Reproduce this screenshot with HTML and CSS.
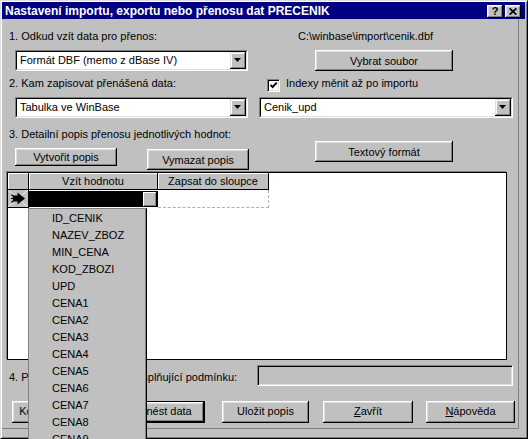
FILE: index.html
```html
<!DOCTYPE html>
<html lang="cs">
<head>
<meta charset="utf-8">
<title>Nastavení importu, exportu nebo přenosu dat</title>
<link rel="stylesheet" href="styles.css">
</head>
<body>
<div class="window">
  <div class="titlebar">
    <span class="title">Nastavení importu, exportu nebo přenosu dat PRECENIK</span>
    <div class="tbtns">
      <span class="tbtn help">?</span>
      <span class="tbtn"><svg width="8" height="7" viewBox="0 0 8 7"><path d="M0.6 0.4 L7.4 6.6 M7.4 0.4 L0.6 6.6" stroke="#000" stroke-width="1.7" fill="none"/></svg></span>
    </div>
  </div>
  <div class="client">
    <div class="row ra">
      <div class="lcol"><span class="lbl">1. Odkud vzít data pro přenos:</span></div>
      <span class="path">C:\winbase\import\cenik.dbf</span>
    </div>
    <div class="row rb">
      <div class="lcol">
        <div class="combo cl"><div class="combo-in"><span class="ctext">Formát DBF (memo z dBase IV)</span><span class="dd"><svg width="7" height="4" viewBox="0 0 7 4"><path d="M0 0H7L3.5 4Z" fill="#000"/></svg></span></div></div>
      </div>
      <div class="btn b-wide b-vybrat">Vybrat soubor</div>
    </div>
    <div class="row rc">
      <div class="lcol"><span class="lbl">2. Kam zapisovat přenášená data:</span></div>
      <span class="chk"><svg width="9" height="9" viewBox="0 0 9 9"><path d="M1.5 3.8 L3.6 6 L7.8 1.6" stroke="#000" stroke-width="1.9" fill="none"/></svg></span>
      <span class="chklbl">Indexy měnit až po importu</span>
    </div>
    <div class="row rd">
      <div class="lcol">
        <div class="combo cl"><div class="combo-in"><span class="ctext">Tabulka ve WinBase</span><span class="dd"><svg width="7" height="4" viewBox="0 0 7 4"><path d="M0 0H7L3.5 4Z" fill="#000"/></svg></span></div></div>
      </div>
      <div class="combo cr"><div class="combo-in"><span class="ctext">Cenik_upd</span><span class="dd"><svg width="7" height="4" viewBox="0 0 7 4"><path d="M0 0H7L3.5 4Z" fill="#000"/></svg></span></div></div>
    </div>
    <div class="row re">
      <span class="lbl">3. Detailní popis přenosu jednotlivých hodnot:</span>
    </div>
    <div class="row rf">
      <div class="btn b-vytvorit">Vytvořit popis</div>
      <div class="btn b-vymazat">Vymazat popis</div>
      <div class="btn b-wide b-text">Textový formát</div>
    </div>
    <div class="grid">
      <div class="grow ghead">
        <div class="gc ind hc"></div>
        <div class="gc c1 hc">Vzít hodnotu</div>
        <div class="gc c2 hc">Zapsat do sloupce</div>
      </div>
      <div class="grow gr1">
        <div class="gc ind rowind">
          <svg width="20" height="17" viewBox="0 0 20 17">
            <path d="M0 0 L20 17 M20 0 L0 17" stroke="#e8e8e8" stroke-width="1" fill="none"/>
            <path d="M9.5 2.5 L17 8.5 L9.5 14.5 Z" fill="#000"/>
            <rect x="5" y="5.5" width="5" height="6" fill="#000"/>
            <path d="M3.5 4.5 L6.5 7.5 M3.5 12.5 L6.5 9.5 M3 8.5 H6" stroke="#000" stroke-width="1.2"/>
          </svg>
        </div>
        <div class="gc c1 sel"><span class="cellbtn"></span></div>
        <div class="gc c2 dashed"></div>
      </div>
      <div class="droplist">
        <div class="item">ID_CENIK</div>
        <div class="item">NAZEV_ZBOZ</div>
        <div class="item">MIN_CENA</div>
        <div class="item">KOD_ZBOZI</div>
        <div class="item">UPD</div>
        <div class="item">CENA1</div>
        <div class="item">CENA2</div>
        <div class="item">CENA3</div>
        <div class="item">CENA4</div>
        <div class="item">CENA5</div>
        <div class="item">CENA6</div>
        <div class="item">CENA7</div>
        <div class="item">CENA8</div>
        <div class="item">CENA9</div>
      </div>
    </div>
    <div class="row rg">
      <div class="lcol4"><span class="lbl">4. Přenést pouze záznamy splňující podmínku:</span></div>
      <div class="field"></div>
    </div>
    <div class="row rh">
      <div class="btn bb b1">Kopírovat popis</div>
      <div class="btn bb b2 default">Přenést data</div>
      <div class="btn bb b3">Uložit popis</div>
      <div class="btn bb b4"><span><u>Z</u>avřít</span></div>
      <div class="btn bb b5"><span><u>N</u>ápověda</span></div>
    </div>
  </div>
</div>
</body>
</html>
```

FILE: styles.css
```css
html, body {
  margin: 0;
  padding: 0;
  overflow: hidden;
}
body {
  width: 528px;
  height: 439px;
  background: #c0c0c0;
  font-family: "Liberation Sans", Arial, sans-serif;
  font-size: 11px;
  color: #000;
}
.window {
  box-sizing: border-box;
  width: 528px;
  height: 439px;
  background: #c0c0c0;
  border: 1px solid;
  border-color: #dfdfdf #000 #000 #dfdfdf;
  padding: 1px;
  box-shadow: inset 1px 1px #fff, inset -1px -1px #808080;
}
.titlebar {
  height: 17px;
  margin-right: 1px;
  background: #000080;
  color: #fff;
  display: flex;
  align-items: flex-start;
  justify-content: space-between;
  padding: 0 4px 0 3px;
}
.title {
  font-weight: bold;
  font-size: 12px;
  line-height: 16px;
  padding-top: 1px;
  white-space: nowrap;
}
.tbtns {
  display: flex;
  gap: 2px;
  margin-top: 3px;
}
.tbtn {
  box-sizing: border-box;
  width: 16px;
  height: 13px;
  background: #c0c0c0;
  box-shadow: inset -1px -1px #000, inset 1px 1px #fff, inset -2px -2px #808080, inset 2px 2px #dfdfdf;
  display: flex;
  align-items: center;
  justify-content: center;
  color: #000;
}
.help {
  font-weight: bold;
  font-size: 11px;
  line-height: 11px;
}
.client {
  box-sizing: border-box;
  width: 517px;
  height: 410px;
  border-right: 1px solid #808080;
  border-bottom: 1px solid #808080;
  padding: 11px 0 0 5px;
}
.row {
  display: flex;
  align-items: flex-start;
}
.lcol {
  width: 252px;
  flex: none;
}
.lbl {
  display: block;
  padding-left: 2px;
  line-height: 13px;
  white-space: nowrap;
}
.path {
  margin-left: 39px;
  line-height: 13px;
  white-space: nowrap;
}
.rb { margin-top: 7px; }
.rc { margin-top: 6px; }
.rd { margin-top: 5px; }
.re { margin-top: 10px; }
.rf { margin-top: 0; }
.rg { margin-top: 5px; }
.rh { margin-top: 15px; }

/* combo boxes */
.combo {
  box-sizing: border-box;
  height: 21px;
  background: #fff;
  border: 1px solid;
  border-color: #808080 #fff #fff #808080;
}
.combo-in {
  box-sizing: border-box;
  height: 19px;
  border: 1px solid;
  border-color: #000 #dfdfdf #dfdfdf #000;
  display: flex;
  align-items: center;
}
.cl { margin-left: 8px; width: 233px; }
.cr { width: 254px; }
.ctext {
  flex: 1;
  padding-left: 3px;
  line-height: 17px;
  white-space: nowrap;
  overflow: hidden;
}
.dd {
  box-sizing: border-box;
  width: 16px;
  height: 17px;
  background: #c0c0c0;
  box-shadow: inset -1px -1px #000, inset 1px 1px #dfdfdf, inset -2px -2px #808080, inset 2px 2px #fff;
  display: flex;
  align-items: center;
  justify-content: center;
  padding: 0 1px 1px 0;
}

/* buttons */
.btn {
  box-sizing: border-box;
  height: 21px;
  background: #c0c0c0;
  box-shadow: inset -1px -1px #000, inset 1px 1px #fff, inset -2px -2px #808080, inset 2px 2px #dfdfdf;
  display: flex;
  align-items: center;
  justify-content: center;
  white-space: nowrap;
  flex: none;
}
.b-wide { width: 138px; }
.b-vybrat { margin-left: 56px; }
.b-vytvorit { margin-left: 8px; margin-top: 7px; width: 102px; height: 18px; }
.b-vymazat { margin-left: 30px; margin-top: 8px; width: 102px; }
.b-text { margin-left: 66px; }
.bb { height: 22px; padding-bottom: 3px; }
.b1 { margin-left: 5px; width: 91px; }
.b2 { margin-left: 13px; width: 89px; }
.b3 { margin-left: 17px; width: 87px; }
.b4 { margin-left: 14px; width: 90px; }
.b5 { margin-left: 13px; width: 89px; }
.default {
  border: 1px solid #000;
}

/* checkbox */
.chk {
  box-sizing: border-box;
  width: 13px;
  height: 13px;
  margin-left: 8px;
  margin-top: 2px;
  background: #fff;
  border: 1px solid;
  border-color: #808080 #fff #fff #808080;
  box-shadow: inset 1px 1px #000, inset -1px -1px #dfdfdf;
  display: flex;
  align-items: center;
  justify-content: center;
}
.chklbl {
  margin-left: 6px;
  line-height: 13px;
  white-space: nowrap;
}

/* grid */
.grid {
  position: relative;
  box-sizing: border-box;
  width: 500px;
  height: 188px;
  margin-top: 2px;
  background: #fff;
  border: 1px solid #000;
  box-shadow: -1px -1px 0 #808080;
}
.grow {
  display: flex;
}
.gc {
  box-sizing: border-box;
  flex: none;
}
.ind { width: 21px; }
.c1 { width: 129px; }
.c2 { width: 111px; }
.hc {
  height: 17px;
  background: #c0c0c0;
  border-right: 1px solid #000;
  border-bottom: 1px solid #000;
  box-shadow: inset 1px 1px #fff;
  text-align: center;
  line-height: 16px;
  white-space: nowrap;
}
.gr1 .gc { height: 18px; }
.rowind {
  background: #c0c0c0;
  border-right: 1px solid #000;
  border-bottom: 1px solid #000;
  overflow: hidden;
}
.rowind svg { display: block; }
.sel {
  background: #000;
  box-shadow: inset 0 1px #fff, inset 0 -1px #fff;
  display: flex;
  justify-content: flex-end;
  align-items: center;
}
.cellbtn {
  box-sizing: border-box;
  width: 15px;
  height: 16px;
  background: #c0c0c0;
  border: 1px solid #000;
  box-shadow: inset 1px 1px #fff, inset -1px -1px #808080;
  margin-right: 1px;
}
.dashed {
  border-right: 1px dashed #b0b0b0;
  border-bottom: 1px dashed #b0b0b0;
}
.droplist {
  position: absolute;
  left: 20px;
  top: 35px;
  width: 119px;
  height: 240px;
  box-sizing: border-box;
  background: #c0c0c0;
  border-left: 1px solid #808080;
  border-top: 1px solid #808080;
  border-right: 1px solid #000;
  box-shadow: inset -1px 0 #808080;
  padding-top: 1px;
  overflow: hidden;
  z-index: 5;
}
.item {
  height: 17px;
  line-height: 17px;
  padding-left: 23px;
  white-space: nowrap;
}

/* condition row */
.lcol4 {
  width: 250px;
  flex: none;
  margin-top: 6px;
}
.field {
  box-sizing: border-box;
  width: 256px;
  height: 21px;
  background: #c0c0c0;
  border: 1px solid;
  border-color: #808080 #fff #fff #808080;
  box-shadow: inset 1px 1px #000, inset -1px -1px #dfdfdf;
}
```
